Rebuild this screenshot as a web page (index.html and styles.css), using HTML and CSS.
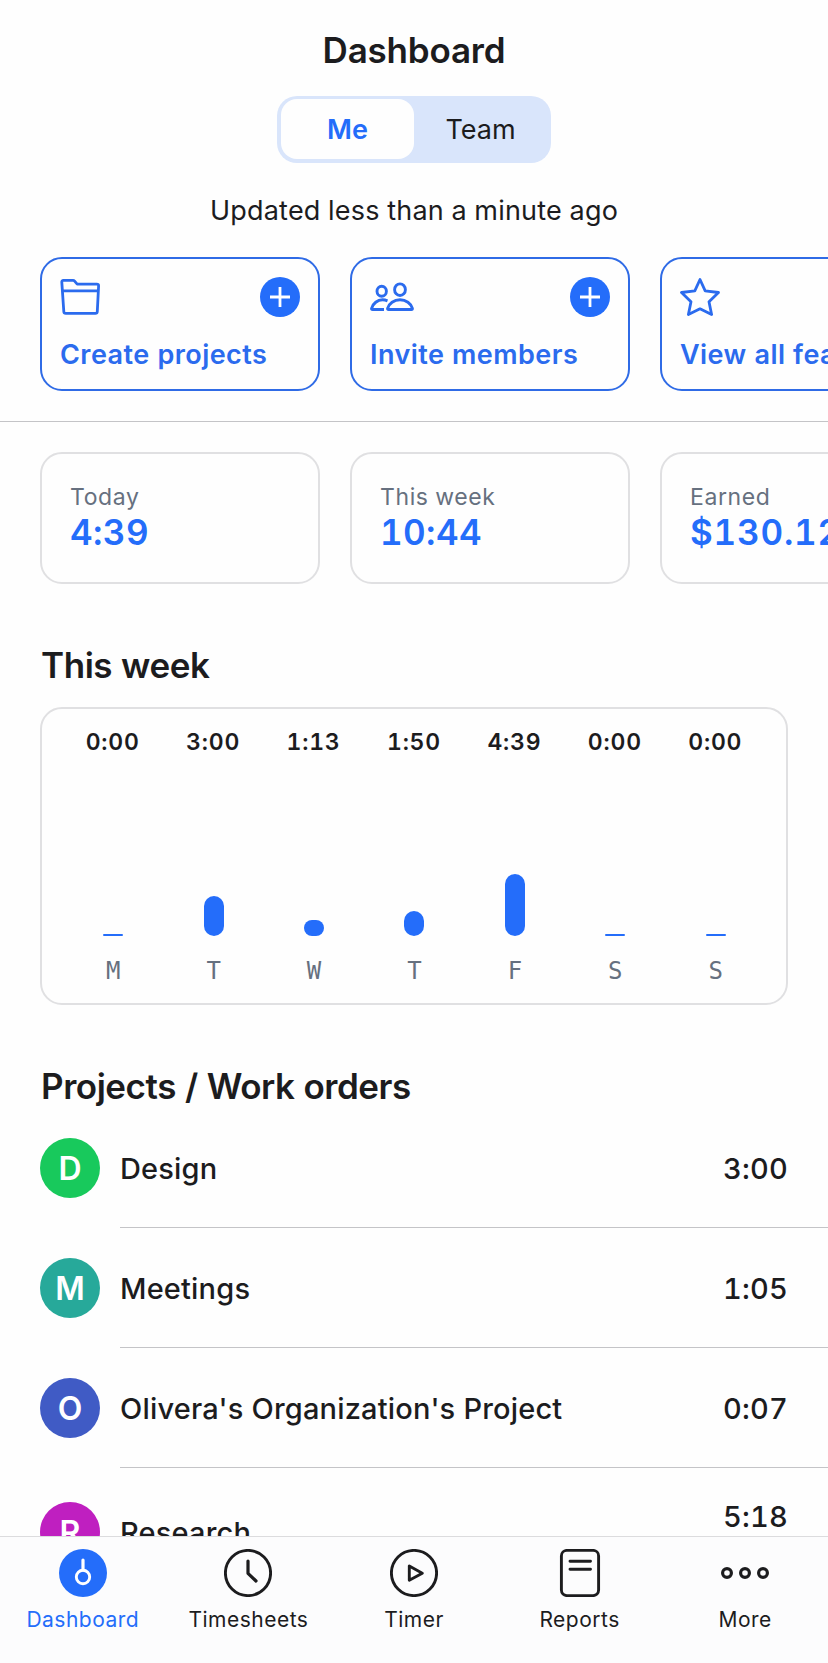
FILE: index.html
```html
<!doctype html>
<html lang="en">
    <head>
        <meta charset="UTF-8" />
        <meta name="viewport" content="width=device-width, initial-scale=1.0" />
        <title>Dashboard</title>
        <link rel="stylesheet" href="styles.css">
    </head>
    <body>
        <main class="screen">
            <h1 class="title">Dashboard</h1>

            <div class="switch">
                <button class="switch-item active">Me</button>
                <button class="switch-item">Team</button>
            </div>

            <p class="updated">Updated less than a minute ago</p>

            <div class="cards actions">
                <div class="card action">
                    <div class="action-top">
                        <svg class="action-icon" width="44" height="40" viewBox="0 0 44 40" fill="none" stroke="currentColor" stroke-width="2.8" stroke-linejoin="round">
                            <path d="M3.8 34.5 1.8 5.2Q1.7 3.4 3.4 3.4h9.6q1 0 1.600.7l2.600 3H36.800q1.900 0 1.800 1.900L37.300 34.500q-.1 1.900-2 1.900H5.800q-1.900 0-2-1.900" />
                            <path d="M2.200 13.800H38.300" />
                        </svg>
                        <svg class="plus" width="40" height="40" viewBox="0 0 40 40">
                            <circle cx="20" cy="20" r="20" fill="#246dfa" />
                            <path d="M20 10v20M10 20h20" stroke="#fff" stroke-width="2.800" />
                        </svg>
                    </div>
                    <span class="action-name">Create projects</span>
                </div>
                <div class="card action">
                    <div class="action-top">
                        <svg class="action-icon" width="46" height="40" viewBox="0 0 46 40" fill="none" stroke="currentColor" stroke-width="2.900" stroke-linejoin="round">
                            <ellipse cx="11.700" cy="14.200" rx="4.700" ry="5" />
                            <ellipse cx="30" cy="12.700" rx="5.400" ry="5.800" />
                            <path d="M14 32.500H2.600q-1.200 0-1-1.200C3 26.500 7.500 22.800 12.500 22.800q2.500 0 5 1" />
                            <path d="M18.600 32.500q-1.200 0-1-1.200C19 26.500 24 22.800 30 22.800s11 3.700 12.400 8.500q.2 1.200-1 1.200z" />
                        </svg>
                        <svg class="plus" width="40" height="40" viewBox="0 0 40 40">
                            <circle cx="20" cy="20" r="20" fill="#246dfa" />
                            <path d="M20 10v20M10 20h20" stroke="#fff" stroke-width="2.800" />
                        </svg>
                    </div>
                    <span class="action-name">Invite members</span>
                </div>
                <div class="card action">
                    <div class="action-top">
                        <svg class="action-icon" width="40" height="40" viewBox="0 0 40 40" fill="none" stroke="currentColor" stroke-width="2.800" stroke-linejoin="round">
                            <path d="M20 2.500 25.200 13.800 38.500 15.500 29 24.800 31.600 37.500 20 31.800 8.400 37.500 11 24.800 1.500 15.500 14.800 13.800z" />
                        </svg>
                    </div>
                    <span class="action-name">View all features</span>
                </div>
            </div>

            <div class="cards stats">
                <div class="card stat">
                    <span class="stat-name">Today</span>
                    <span class="stat-value">4:39</span>
                </div>
                <div class="card stat">
                    <span class="stat-name">This week</span>
                    <span class="stat-value">10:44</span>
                </div>
                <div class="card stat">
                    <span class="stat-name">Earned</span>
                    <span class="stat-value money">$130.12</span>
                </div>
            </div>

            <h2 class="heading">This week</h2>
            <div class="chart">
                <div class="day"><span class="hours">0:00</span><i class="bar" style="height: 2px"></i><span class="letter">M</span></div>
                <div class="day"><span class="hours">3:00</span><i class="bar" style="height: 40px"></i><span class="letter">T</span></div>
                <div class="day"><span class="hours">1:13</span><i class="bar" style="height: 16px"></i><span class="letter">W</span></div>
                <div class="day"><span class="hours">1:50</span><i class="bar" style="height: 25px"></i><span class="letter">T</span></div>
                <div class="day"><span class="hours">4:39</span><i class="bar" style="height: 62px"></i><span class="letter">F</span></div>
                <div class="day"><span class="hours">0:00</span><i class="bar" style="height: 2px"></i><span class="letter">S</span></div>
                <div class="day"><span class="hours">0:00</span><i class="bar" style="height: 2px"></i><span class="letter">S</span></div>
            </div>

            <h2 class="heading projects-heading">Projects / Work orders</h2>
            <ul class="projects">
                <li class="project">
                    <span class="avatar green">D</span>
                    <div class="project-info"><span class="project-name">Design</span><span class="project-time">3:00</span></div>
                </li>
                <li class="project">
                    <span class="avatar teal">M</span>
                    <div class="project-info"><span class="project-name">Meetings</span><span class="project-time">1:05</span></div>
                </li>
                <li class="project">
                    <span class="avatar blue">O</span>
                    <div class="project-info"><span class="project-name">Olivera's Organization's Project</span><span class="project-time">0:07</span></div>
                </li>
                <li class="project tall">
                    <span class="avatar purple">R</span>
                    <div class="project-info"><span class="project-name">Research</span><span class="project-time">5:18</span></div>
                </li>
            </ul>
        </main>

        <nav class="tabs">
            <a class="tab active">
                <svg width="48" height="48" viewBox="0 0 48 48" fill="none">
                    <circle cx="24" cy="24" r="24" fill="#246dfa" />
                    <circle cx="24" cy="28" r="6.700" stroke="#fff" stroke-width="2.900" />
                    <path d="M24 21V11" stroke="#fff" stroke-width="3.200" stroke-linecap="round" />
                </svg>
                <span>Dashboard</span>
            </a>
            <a class="tab">
                <svg width="48" height="48" viewBox="0 0 48 48" fill="none" stroke="currentColor" stroke-width="2.900" stroke-linecap="round" stroke-linejoin="round">
                    <circle cx="24" cy="24" r="22.600" />
                    <path d="M24 12v12.300l8 7.700" stroke-width="3.200" />
                </svg>
                <span>Timesheets</span>
            </a>
            <a class="tab">
                <svg width="48" height="48" viewBox="0 0 48 48" fill="none" stroke="currentColor" stroke-width="2.900" stroke-linejoin="round">
                    <circle cx="24" cy="24" r="22.600" />
                    <path d="M19.300 17v14.300L32.300 24.200z" />
                </svg>
                <span>Timer</span>
            </a>
            <a class="tab">
                <svg width="48" height="48" viewBox="0 0 48 48" fill="none" stroke="currentColor" stroke-width="2.900" stroke-linecap="round">
                    <rect x="5.400" y="1.400" width="37.200" height="45.200" rx="5.500" />
                    <path d="M14 12.300h20.500M14 20.300h20.500" />
                </svg>
                <span>Reports</span>
            </a>
            <a class="tab">
                <svg width="48" height="48" viewBox="0 0 48 48" fill="none" stroke="currentColor" stroke-width="3.200">
                    <circle cx="6" cy="24" r="4.400" />
                    <circle cx="24" cy="24" r="4.400" />
                    <circle cx="42" cy="24" r="4.400" />
                </svg>
                <span>More</span>
            </a>
        </nav>
    </body>
</html>
```
FILE: styles.css
```css
* {
    box-sizing: border-box;
}
body {
    font-family: Inter, "Liberation Sans", sans-serif;
    font-variant-numeric: tabular-nums;
    background-color: #fefefe;
    color: #1c1c1e;
    margin: 0;
    height: 1663px;
    overflow: hidden;
    display: flex;
    flex-direction: column;
}
h1,
h2,
p,
ul {
    margin: 0;
    padding: 0;
}
.screen {
    height: 1536px;
    overflow: hidden;
}
.title {
    height: 44px;
    margin-top: 28px;
    text-align: center;
    font-size: 35px;
    line-height: 44px;
    font-weight: 600;
    letter-spacing: -0.2px;
}
.switch {
    display: flex;
    width: 274px;
    height: 67px;
    margin: 24px auto 0;
    padding: 3px 4px 4px;
    border-radius: 20px;
    background-color: #d9e5fb;
}
.switch-item {
    flex: 1;
    padding: 0;
    border: none;
    border-radius: 16px;
    background: none;
    font: inherit;
    font-size: 27px;
    color: #1c1c1e;
}
.switch-item.active {
    background-color: #fefefe;
    color: #246dfa;
    font-weight: 600;
}
.updated {
    margin-top: 31px;
    text-align: center;
    font-size: 27px;
    line-height: 34px;
    letter-spacing: 0.22px;
}
.cards {
    display: flex;
    gap: 30px;
    padding-left: 40px;
}
.card {
    flex: none;
    width: 280px;
    border: 2px solid #e0e0e2;
    border-radius: 22px;
}
.actions {
    height: 165px;
    margin-top: 29px;
    border-bottom: 1px solid #c4c4c7;
}
.action {
    height: 134px;
    padding: 18px;
    border-color: #2f6be6;
    color: #2b6bee;
}
.action-top {
    display: flex;
    justify-content: space-between;
    height: 40px;
}
.action-name {
    display: block;
    margin-top: 21px;
    white-space: nowrap;
    font-size: 27px;
    line-height: 34px;
    font-weight: 600;
    letter-spacing: 0.45px;
}
.stats {
    margin-top: 30px;
}
.stat {
    display: flex;
    flex-direction: column;
    height: 132px;
    padding: 27px 28px 0;
}
.stat-name {
    font-size: 23px;
    line-height: 32px;
    letter-spacing: 0.6px;
    color: #66707f;
}
.stat-value {
    margin-top: -1px;
    font-size: 35px;
    line-height: 40px;
    font-weight: 600;
    letter-spacing: 0.4px;
    color: #246dfa;
}
.money {
    letter-spacing: 0.8px;
}
.heading {
    margin: 60px 0 0 41px;
    font-size: 35px;
    line-height: 42px;
    font-weight: 600;
    letter-spacing: -0.45px;
}
.chart {
    display: flex;
    height: 298px;
    margin: 21px 40px 0;
    padding: 19px 20px 0 21px;
    border: 2px solid #e0e0e2;
    border-radius: 22px;
}
.day {
    flex: 1;
    display: flex;
    flex-direction: column;
    align-items: center;
    height: 257px;
}
.hours {
    font-size: 23px;
    line-height: 28px;
    font-weight: 600;
    letter-spacing: 0.8px;
    padding-right: 1px;
}
.bar {
    width: 20px;
    margin-top: auto;
    border-radius: 10px;
    background-color: #246dfa;
}
.letter {
    margin-top: 21px;
    font-family: "DejaVu Sans Mono", monospace;
    font-size: 24px;
    line-height: 28px;
    color: #66707f;
}
.projects-heading {
    margin-top: 60px;
}
.projects {
    margin-top: 1px;
    list-style: none;
}
.project {
    display: flex;
    align-items: center;
    height: 120px;
    padding-left: 40px;
}
.avatar {
    width: 60px;
    height: 60px;
    border-radius: 50%;
    text-align: center;
    font-size: 32px;
    line-height: 61px;
    font-weight: 600;
    color: #fff;
}
.green { background-color: #18c95c; }
.teal { background-color: #27a99a; }
.blue { background-color: #405bc5; }
.purple { background-color: #bf1fc0; }
.project-info {
    flex: 1;
    display: flex;
    align-items: center;
    justify-content: space-between;
    height: 120px;
    margin-left: 20px;
    padding: 2px 40px 0 0;
    border-bottom: 1px solid #c4c4c7;
    font-size: 29px;
    font-weight: 500;
    letter-spacing: 0.18px;
}
.tall,
.tall .project-info {
    height: 128px;
}
.tall .project-time {
    margin-bottom: 32px;
}
.tabs {
    display: flex;
    height: 127px;
    border-top: 1px solid #dcdcde;
    background-color: #fcfcfd;
}
.tab {
    flex: 1;
    display: flex;
    flex-direction: column;
    align-items: center;
    padding-top: 12px;
    font-size: 21px;
    line-height: 28px;
    letter-spacing: 0.5px;
}
.tab span {
    margin-top: 9px;
}
.tab.active {
    color: #246dfa;
}
```
